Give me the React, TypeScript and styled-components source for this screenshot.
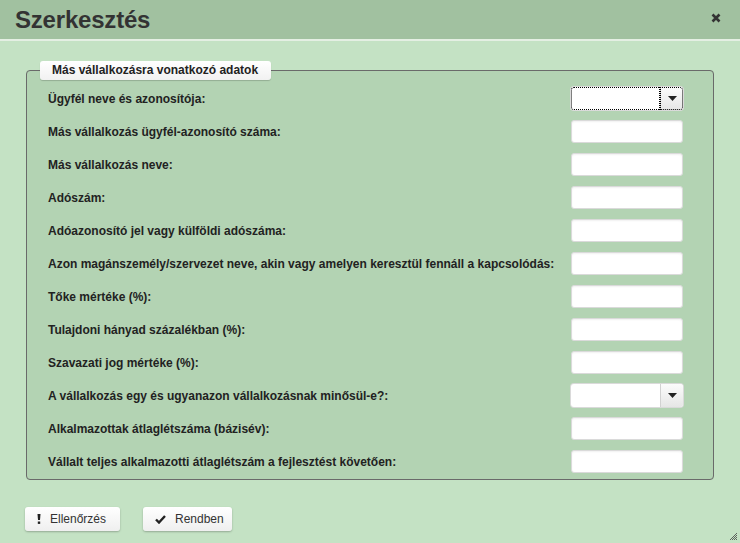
import React from "react";
import styled, { createGlobalStyle } from "styled-components";

const Global = createGlobalStyle`
  html, body { margin: 0; padding: 0; }
  body { font-family: "Liberation Sans", Arial, sans-serif; background: #c4e2c4; }
`;

const Dialog = styled.div`
  position: relative;
  width: 740px;
  height: 543px;
  background: #c4e2c4;
  display: flex;
  flex-direction: column;
  overflow: hidden;
`;

const Header = styled.div`
  height: 39px;
  background: #a1c1a0;
  border-bottom: 2px solid #e4efe3;
  display: flex;
  align-items: center;
  justify-content: space-between;
  padding: 0 18px 0 15px;
  box-sizing: content-box;
`;

const Title = styled.h1`
  margin: 0;
  font-size: 24px;
  font-weight: bold;
  color: #333;
  letter-spacing: -0.2px;
`;

const Close = styled.button`
  border: 0;
  background: transparent;
  padding: 0;
  width: 12px;
  height: 12px;
  display: flex;
  align-items: center;
  justify-content: center;
  margin-top: -4px;
  cursor: pointer;
`;

const Body = styled.div`
  padding: 20px 26px 0 26px;
  flex: 1;
  display: flex;
  flex-direction: column;
`;

const Fieldset = styled.fieldset`
  margin: 0;
  width: 688px;
  box-sizing: border-box;
  border: 1px solid #6a6a6a;
  border-radius: 4px;
  background: #b3d3b3;
  padding: 0 30px 1px 21px;
`;

const Legend = styled.legend`
  margin-left: -8px;
  padding: 2px 13px 3px 12px;
  background: linear-gradient(#ffffff, #f1f1f1);
  border-radius: 3px;
  box-shadow: 0 1px 1px rgba(0, 0, 0, 0.18);
  font-size: 12px;
  font-weight: bold;
  color: #222;
  white-space: nowrap;
`;

const Rows = styled.div`
  padding-top: 2px;
  display: flex;
  flex-direction: column;
`;

const Row = styled.div`
  height: 33px;
  display: flex;
  align-items: center;
  justify-content: space-between;
`;

const Label = styled.label`
  font-size: 12px;
  font-weight: bold;
  color: #222;
`;

const TextInput = styled.input`
  width: 112px;
  height: 23px;
  box-sizing: border-box;
  border: 1px solid #dadada;
  border-radius: 3px;
  background: #fff;
  box-shadow: inset 0 1px 2px rgba(0, 0, 0, 0.06);
  outline: none;
  padding: 0 4px;
  font-size: 12px;
`;

const SelectBox = styled.div`
  width: 112px;
  height: 23px;
  display: flex;
  box-sizing: border-box;
  border-radius: 3px;
  background: #fff;
  box-shadow: 0 0 0 1px #dadada;
`;

const SelectText = styled.div<{ $focused?: boolean }>`
  flex: 1;
  border-radius: 3px 0 0 3px;
  outline: ${(p) => (p.$focused ? "1px dotted #000" : "none")};
  outline-offset: -1px;
`;

const SelectButton = styled.div<{ $focused?: boolean }>`
  width: 22px;
  display: flex;
  align-items: center;
  justify-content: center;
  background: linear-gradient(#fcfcfc, #e6e6e6);
  border-left: 1px solid #d2d2d2;
  border-radius: 0 3px 3px 0;
  outline: ${(p) => (p.$focused ? "1px dotted #000" : "none")};
  outline-offset: -1px;
`;

const Footer = styled.div`
  display: flex;
  gap: 23px;
  padding-top: 27px;
  margin-left: -1px;
`;

const Button = styled.button<{ $w: number }>`
  width: ${(p) => p.$w}px;
  height: 24px;
  display: flex;
  align-items: center;
  gap: 9px;
  padding: 0 0 0 12px;
  border: 0;
  border-radius: 3px;
  background: linear-gradient(#ffffff, #efefef);
  box-shadow: 0 1px 2px rgba(0, 0, 0, 0.25);
  font-family: "Liberation Sans", Arial, sans-serif;
  font-size: 12px;
  color: #333;
  cursor: pointer;
`;

const Grip = styled.div`
  position: absolute;
  right: 3px;
  bottom: 3px;
  width: 7px;
  height: 7px;
  display: flex;
`;

const Arrow = () => (
  <svg width="9" height="5" viewBox="0 0 9 5">
    <path d="M0 0H9L4.5 5Z" fill="#222" />
  </svg>
);

const Select = ({ focused }: { focused?: boolean }) => (
  <SelectBox>
    <SelectText $focused={focused} />
    <SelectButton $focused={focused}>
      <Arrow />
    </SelectButton>
  </SelectBox>
);

const rows: { label: string; select?: boolean; focused?: boolean }[] = [
  { label: "Ügyfél neve és azonosítója:", select: true, focused: true },
  { label: "Más vállalkozás ügyfél-azonosító száma:" },
  { label: "Más vállalkozás neve:" },
  { label: "Adószám:" },
  { label: "Adóazonosító jel vagy külföldi adószáma:" },
  { label: "Azon magánszemély/szervezet neve, akin vagy amelyen keresztül fennáll a kapcsolódás:" },
  { label: "Tőke mértéke (%):" },
  { label: "Tulajdoni hányad százalékban (%):" },
  { label: "Szavazati jog mértéke (%):" },
  { label: "A vállalkozás egy és ugyanazon vállalkozásnak minősül-e?:", select: true },
  { label: "Alkalmazottak átlaglétszáma (bázisév):" },
  { label: "Vállalt teljes alkalmazotti átlaglétszám a fejlesztést követően:" },
];

export default function App() {
  return (
    <Dialog>
      <Global />
      <Header>
        <Title>Szerkesztés</Title>
        <Close aria-label="close">
          <svg width="10" height="10" viewBox="0 0 10 10">
            <path d="M1.5 1.5L8.5 8.5M8.5 1.5L1.5 8.5" stroke="#333" strokeWidth="2.6" />
          </svg>
        </Close>
      </Header>
      <Body>
        <Fieldset>
          <Legend>Más vállalkozásra vonatkozó adatok</Legend>
          <Rows>
            {rows.map((r) => (
              <Row key={r.label}>
                <Label>{r.label}</Label>
                {r.select ? <Select focused={r.focused} /> : <TextInput />}
              </Row>
            ))}
          </Rows>
        </Fieldset>
        <Footer>
          <Button $w={95}>
            <svg width="4" height="10" viewBox="0 0 4 10">
              <path d="M0.5 0H3.5L3 6H1Z" fill="#222" />
              <rect x="0.8" y="7.5" width="2.4" height="2.4" fill="#222" />
            </svg>
            Ellenőrzés
          </Button>
          <Button $w={89}>
            <svg width="11" height="9" viewBox="0 0 11 9">
              <path d="M1 4.5L4 7.5L10 1" stroke="#222" strokeWidth="2.4" fill="none" />
            </svg>
            Rendben
          </Button>
        </Footer>
      </Body>
      <Grip>
        <svg width="7" height="7" viewBox="0 0 7 7">
          <path d="M7 0L0 7M7 2L2 7M7 4L4 7M7 6L6 7" stroke="#444" strokeWidth="0.8" />
        </svg>
      </Grip>
    </Dialog>
  );
}
